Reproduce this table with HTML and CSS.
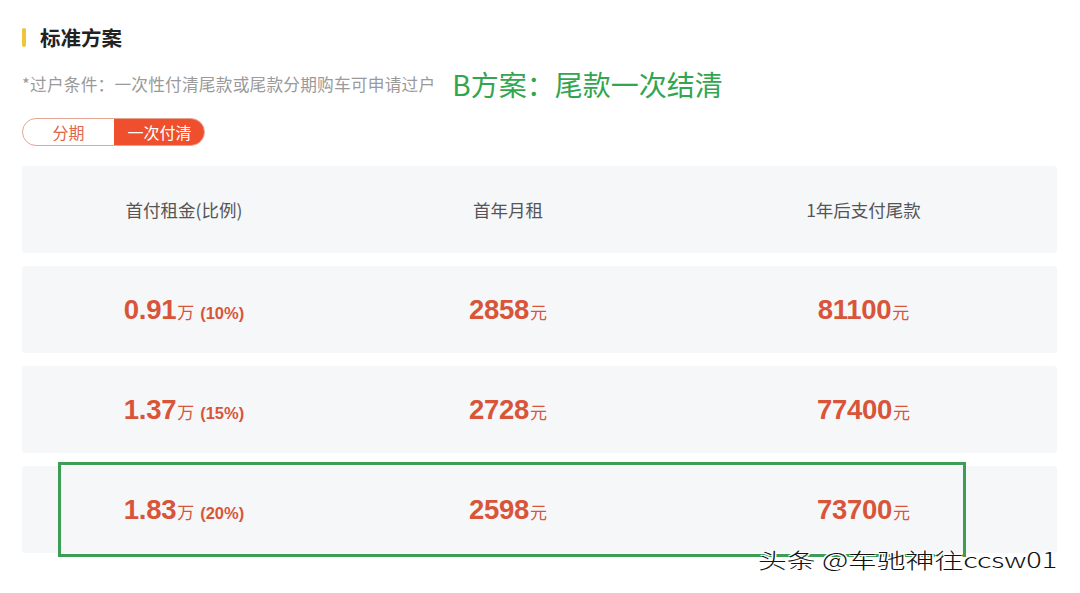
FILE: index.html
```html
<!DOCTYPE html>
<html lang="zh">
<head>
<meta charset="utf-8">
<link rel="stylesheet" href="styles.css">
</head>
<body>
<div class="page">
  <div class="title"><span class="bar"></span><span>标准方案</span></div>
  <div class="sub-row">
    <span class="sub">*过户条件：一次性付清尾款或尾款分期购车可申请过户</span>
    <span class="note">B方案：尾款一次结清</span>
  </div>
  <div class="toggle">
    <span class="opt">分期</span>
    <span class="opt active">一次付清</span>
  </div>
  <div class="table">
    <div class="row head">
      <div class="cell">首付租金(比例)</div>
      <div class="cell">首年月租</div>
      <div class="cell">1年后支付尾款</div>
    </div>
    <div class="row">
      <div class="cell"><b>0.91</b><i>万</i><em>(10%)</em></div>
      <div class="cell"><b>2858</b><i>元</i></div>
      <div class="cell"><b>81100</b><i>元</i></div>
    </div>
    <div class="row">
      <div class="cell"><b>1.37</b><i>万</i><em>(15%)</em></div>
      <div class="cell"><b>2728</b><i>元</i></div>
      <div class="cell"><b>77400</b><i>元</i></div>
    </div>
    <div class="row">
      <div class="cell"><b>1.83</b><i>万</i><em>(20%)</em></div>
      <div class="cell"><b>2598</b><i>元</i></div>
      <div class="cell"><b>73700</b><i>元</i></div>
    </div>
  </div>
  <div class="highlight"></div>
  <div class="watermark">头条 @车驰神往ccsw01</div>
</div>
</body>
</html>
```
FILE: styles.css
```css
* { box-sizing: border-box; }
html, body { margin: 0; padding: 0; background: #fff; }
body {
  width: 1080px;
  height: 593px;
  overflow: hidden;
  font-family: "Noto Sans CJK SC", "Liberation Sans", sans-serif;
}
.page {
  position: relative;
  padding: 26px 23px 0 22px;
  height: 593px;
}
.title {
  display: flex;
  align-items: center;
  gap: 14px;
  height: 22px;
  font-size: 20.5px;
  font-weight: 700;
  color: #222;
}
.bar {
  width: 4px;
  height: 19px;
  border-radius: 2px;
  background: #efc53a;
}
.sub-row {
  display: flex;
  align-items: center;
  gap: 17px;
  margin-top: 22px;
  height: 28px;
}
.sub {
  font-size: 16.7px;
  color: #9a9a9a;
  letter-spacing: 0.2px;
}
.note {
  font-size: 28px;
  color: #32a550;
  line-height: 28px;
}
.toggle {
  display: flex;
  width: 183px;
  height: 28px;
  margin-top: 20px;
  border: 1px solid #e6a495;
  border-radius: 14px;
  overflow: hidden;
}
.opt {
  flex: 1;
  display: flex;
  align-items: center;
  justify-content: center;
  font-size: 16px;
  color: #e0664c;
}
.opt.active {
  background: #ef4f2d;
  color: #fff;
  margin: -1px -1px -1px 0;
}
.table {
  display: flex;
  flex-direction: column;
  gap: 13px;
  margin-top: 20px;
}
.row {
  display: grid;
  grid-template-columns: 324px 324px 1fr;
  height: 87px;
  background: #f6f7f9;
  border-radius: 3px;
}
.cell {
  display: flex;
  align-items: baseline;
  justify-content: center;
  padding-top: 28px;
  color: #d8553a;
}
.head .cell {
  padding-top: 0;
  align-items: center;
  font-size: 17.5px;
  color: #555;
}
.cell b {
  font-family: "Liberation Sans", "Noto Sans CJK SC", sans-serif;
  font-size: 27.5px;
  font-weight: 700;
  letter-spacing: -0.3px;
}
.cell i {
  font-style: normal;
  font-size: 17px;
  margin-left: 1px;
}
.cell em {
  font-style: normal;
  font-family: "Liberation Sans", sans-serif;
  font-weight: 700;
  font-size: 16.5px;
  margin-left: 6px;
}
.highlight {
  position: absolute;
  left: 58px;
  top: 462px;
  width: 908px;
  height: 95px;
  border: 3px solid #3c9d55;
}
.watermark {
  position: absolute;
  left: 758px;
  top: 544px;
  font-size: 21px;
  font-weight: 300;
  color: #111;
  white-space: nowrap;
  transform: scaleX(1.37);
  transform-origin: left center;
  text-shadow: 1px 1px 0 #fff, -1px -1px 0 #fff, 1px -1px 0 #fff, -1px 1px 0 #fff;
}
```
